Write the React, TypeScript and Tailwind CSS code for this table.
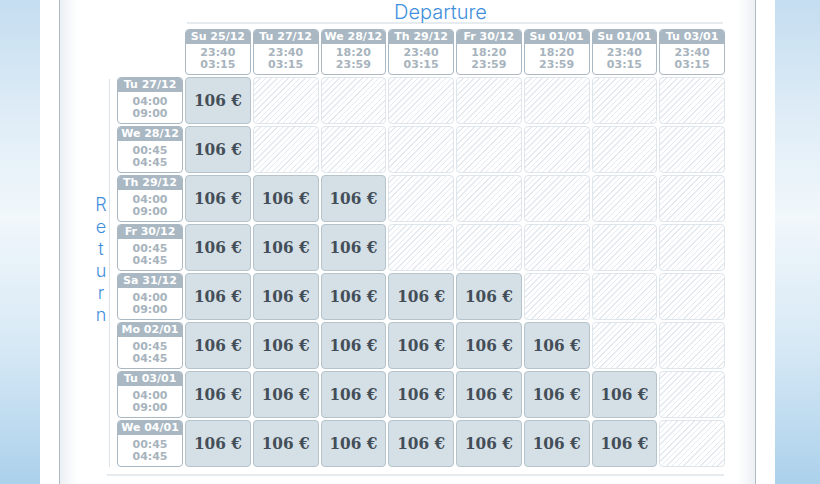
import React from "react";

const cols = [
  ["Su 25/12", "23:40", "03:15"],
  ["Tu 27/12", "23:40", "03:15"],
  ["We 28/12", "18:20", "23:59"],
  ["Th 29/12", "23:40", "03:15"],
  ["Fr 30/12", "18:20", "23:59"],
  ["Su 01/01", "18:20", "23:59"],
  ["Su 01/01", "23:40", "03:15"],
  ["Tu 03/01", "23:40", "03:15"],
];

const rows: [string, string, string, number][] = [
  ["Tu 27/12", "04:00", "09:00", 1],
  ["We 28/12", "00:45", "04:45", 1],
  ["Th 29/12", "04:00", "09:00", 3],
  ["Fr 30/12", "00:45", "04:45", 3],
  ["Sa 31/12", "04:00", "09:00", 5],
  ["Mo 02/01", "00:45", "04:45", 6],
  ["Tu 03/01", "04:00", "09:00", 7],
  ["We 04/01", "00:45", "04:45", 7],
];

const sans = "font-['DejaVu_Sans',Verdana,sans-serif]";

function DateBox({ d, t1, t2 }: { d: string; t1: string; t2: string }) {
  return (
    <div className={`flex flex-col overflow-hidden rounded-[4px] border border-[#a9b8c3] bg-white ${sans}`}>
      <div className="h-[14px] whitespace-nowrap bg-[#a9b8c3] text-center text-[11px] font-bold leading-[14px] text-white">{d}</div>
      <div className="flex flex-1 flex-col items-center justify-center text-[11px] font-bold leading-[12px] text-[#a7b3bd]">
        <div>{t1}</div>
        <div>{t2}</div>
      </div>
    </div>
  );
}

function PriceCell() {
  return (
    <div className="flex items-center justify-center rounded-[4px] border border-[#b5c3cc] bg-[#d5dfe6] font-['DejaVu_Serif',serif] text-[17px] font-bold font-stretch-condensed text-[#434e58]">
      106 €
    </div>
  );
}

function EmptyCell() {
  return (
    <div className="rounded-[4px] border border-[#dfe6eb] bg-[repeating-linear-gradient(135deg,#e4eaef_0px,#e4eaef_1px,#ffffff_1px,#ffffff_4px)]" />
  );
}

const band = "bg-[linear-gradient(to_bottom,#c4ddf0_0%,#e0edf7_25%,#f1f7fb_45%,#d6e8f5_72%,#abd1eb_100%)]";

export default function App() {
  return (
    <div className="flex h-[484px] w-full overflow-hidden">
      <div className={`w-[40px] shrink-0 ${band}`} />
      <div className="flex w-[735px] shrink-0 bg-white px-[19px]">
        <div className="flex w-[697px] border-x border-[#b0bcc7] bg-[linear-gradient(to_right,#ecf0f3,#ffffff_18px,#ffffff_calc(100%-18px),#ecf0f3)]">
          <div className="flex w-full flex-col">
            {/* Title */}
            <div className="ml-[127px] w-[536px] border-b-2 border-[#e6ebef]">
              <div className="h-[22px] pl-[207px] font-['Inter',sans-serif] text-[20px] font-light leading-[24px] text-[#3f8fdc]">
                Departure
              </div>
            </div>
            {/* Header row */}
            <div className="mt-[5px] ml-[125px] grid h-[46px] w-[540px] grid-cols-8 gap-[2px]">
              {cols.map((c, i) => (
                <DateBox key={i} d={c[0]} t1={c[1]} t2={c[2]} />
              ))}
            </div>
            {/* Body */}
            <div className="mt-[2px] flex">
              <div className="flex w-[49px] items-center pl-[34px] pb-[24px]">
                <div className="flex w-[14px] flex-col items-center font-['Inter',sans-serif] text-[18px] font-light leading-[22px] text-[#3f8fdc]">
                  {"Return".split("").map((ch, i) => (
                    <span key={i}>{ch}</span>
                  ))}
                </div>
              </div>
              <div className="mt-[2px] h-[388px] w-[1px] bg-[#dde3e8]" />
              <div className="ml-[7px] grid w-[608px] grid-cols-[66px_repeat(8,minmax(0,1fr))] grid-rows-[repeat(8,47px)] gap-[2px]">
                {rows.map((r, ri) => (
                  <React.Fragment key={ri}>
                    <DateBox d={r[0]} t1={r[1]} t2={r[2]} />
                    {cols.map((_, ci) =>
                      ci < r[3] ? <PriceCell key={ci} /> : <EmptyCell key={ci} />
                    )}
                  </React.Fragment>
                ))}
              </div>
            </div>
            <div className="mt-[7px] ml-[47px] h-[2px] w-[617px] bg-[#e6ebef]" />
          </div>
        </div>
      </div>
      <div className={`flex-1 ${band}`} />
    </div>
  );
}
